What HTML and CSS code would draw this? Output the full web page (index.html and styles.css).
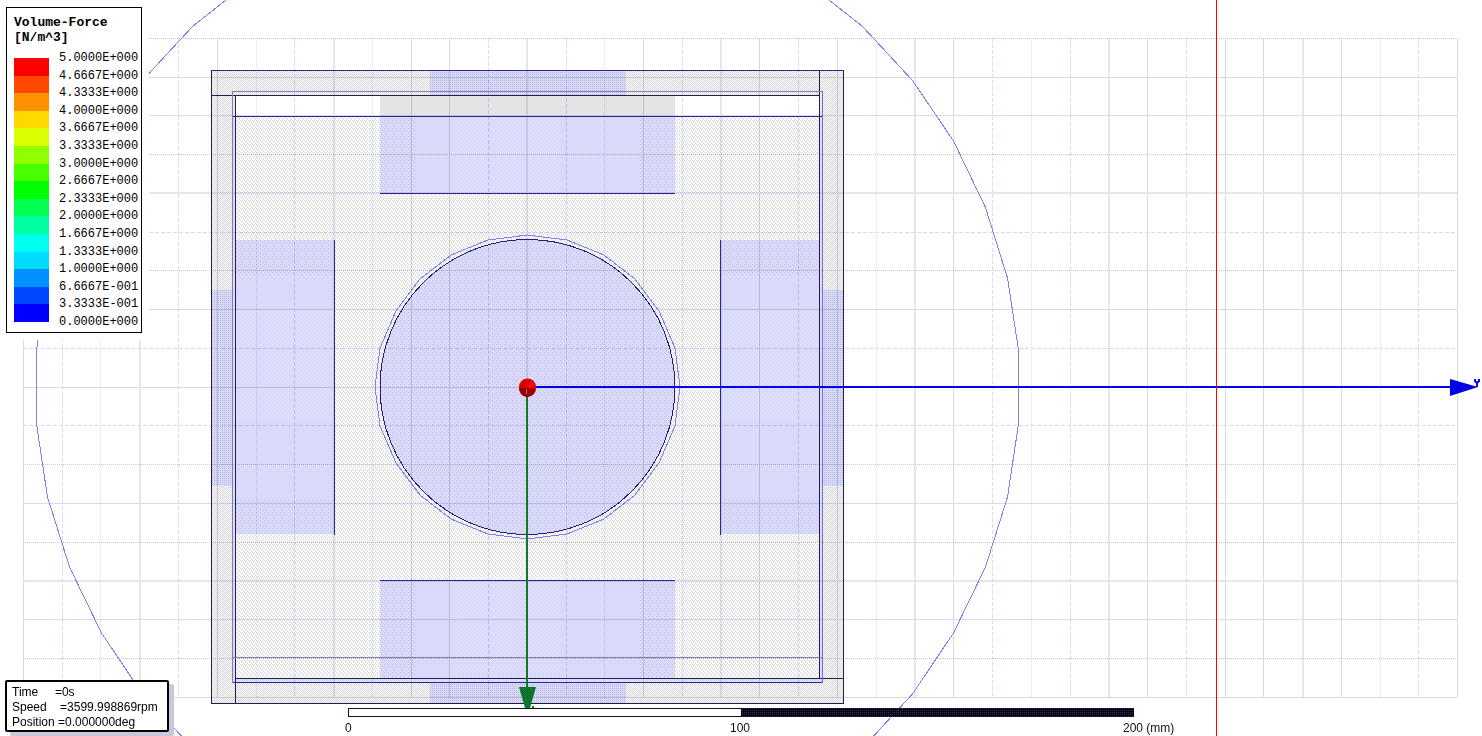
FILE: index.html
```
<!DOCTYPE html>
<html lang="en">
<head>
<meta charset="utf-8">
<title>Volume-Force plot</title>
<link rel="stylesheet" href="styles.css">
</head>
<body>
<main class="viewport">
<svg class="scene" viewBox="0 0 1482 736" role="img" aria-label="Motor cross section with grid and axes">
<defs>
<pattern id="air" width="4" height="4" patternUnits="userSpaceOnUse">
<path class="px-air" d="M0 0h1v1h-1zM2 0h1v1h-1zM1 2h1v1h-1zM3 2h1v1h-1z"/>
<path class="px-olive" d="M1 1h1v1h-1zM3 3h1v1h-1z"/>
</pattern>
<pattern id="frame" width="4" height="4" patternUnits="userSpaceOnUse">
<path class="px-frame" d="M0 0h1v1h-1zM2 0h1v1h-1zM1 1h1v1h-1zM3 1h1v1h-1zM0 2h1v1h-1zM2 2h1v1h-1zM1 3h1v1h-1zM3 3h1v1h-1z"/>
</pattern>
<pattern id="rotor" width="4" height="4" patternUnits="userSpaceOnUse">
<path class="px-gray" d="M0 0h1v1h-1zM2 2h1v1h-1z"/>
</pattern>
<pattern id="warm" width="4" height="4" patternUnits="userSpaceOnUse">
<path class="px-cream" d="M0 0h1v1h-1zM2 2h1v1h-1z"/>
</pattern>
<pattern id="patch" width="2" height="2" patternUnits="userSpaceOnUse">
<path class="px-dusk" d="M0 0h1v1h-1z"/>
</pattern>
<pattern id="ink" width="2" height="2" patternUnits="userSpaceOnUse">
<rect class="ink-dark" width="2" height="2"/>
<path class="ink-blue" d="M0 0h1v1h-1z"/>
</pattern>
<pattern id="leaf" width="2" height="2" patternUnits="userSpaceOnUse">
<rect class="leaf-a" width="2" height="2"/>
<path class="leaf-b" d="M0 0h1v1h-1zM1 1h1v1h-1z"/>
</pattern>
</defs>

<g class="grid">
<path class="olive" d="M23.5 38V697M217.5 38V697M411.5 38V697M449.5 38V697M643.5 38V697M759.5 38V697M837.5 38V697M953.5 38V697M1147.5 38V697M1225.5 38V697M1263.5 38V697M1341.5 38V697M1457.5 38V697"/>
<path class="olive" d="M23 77.5H1457M23 309.5H1457M23 387.5H1457M23 697.5H1457"/>
<path class="wide" d="M140 38V697M334 38V697M527 38V697M721 38V697M915 38V697M1109 38V697M1303 38V697M23 193H1457M23 581H1457"/>
<path class="blue" d="M23 115.5H1457M23 503.5H1457M23 619.5H1457"/>
<path class="blue dash" d="M62.5 38V697M178.5 38V697M294.5 38V697M488.5 38V697M566.5 38V697M682.5 38V697M798.5 38V697M992.5 38V697M1070.5 38V697M1186.5 38V697M1418.5 38V697M23 232.5H1457M23 348.5H1457M23 425.5H1457"/>
<path class="blue dot" d="M100.5 38V697M256.5 38V697M372.5 38V697M604.5 38V697M876.5 38V697M1031.5 38V697M1380.5 38V697"/>
<path class="khaki dot" d="M23 38.5H1457M23 154.5H1457M23 270.5H1457M23 464.5H1457M23 542.5H1457M23 658.5H1457"/>
</g>

<g class="solids">
<path fill="url(#air)" d="M236 117H819V678H236zM674.500 387A147.500 147.500 0 1 0 379.500 387A147.500 147.500 0 1 0 674.500 387z" fill-rule="evenodd"/>
<path fill="url(#frame)" d="M211 70H843V703H211zM236 96V678H819V96z" fill-rule="evenodd"/>
<circle class="body" cx="527" cy="387" r="147.500"/>
<circle fill="url(#rotor)" cx="527" cy="387" r="147.500"/>
<path class="body" d="M380 117h295v76h-295zM380 581h295v97h-295zM236 240h98v294h-98zM721 240h98v294h-98z"/>
<path fill="url(#rotor)" d="M380 117h35v76h-35zM640 117h35v76h-35zM380 581h35v97h-35zM640 581h35v97h-35zM236 240h98v35h-98zM236 499h98v35h-98zM721 240h98v35h-98zM721 499h98v35h-98z"/>
<path fill="url(#warm)" d="M450 117h110v76h-110zM450 581h110v97h-110zM236 310h98v109h-98zM721 310h98v109h-98z"/>
<path class="px-shade" d="M380 96h295v20h-295z"/>
<path class="body" d="M430 71h196v24h-196zM430 679h196v24h-196zM212 290h23v196h-23zM820 290h23v196h-23z"/>
<path fill="url(#patch)" d="M430 71h196v24h-196zM430 679h196v24h-196zM212 290h23v196h-23zM820 290h23v196h-23z"/>
<path class="body" d="M233 117h2v565h-2zM236 679h586v3h-586zM820 117h2v565h-2z"/>
</g>

<g class="lines">
<path class="navy" d="M211.500 70.500H843.500V703.500H211.500zM211 95.500H819M235.500 95V703M819.500 70V678M235 678.500H843"/>
<path class="indigo" d="M232 116.500H822M232 682.500H822M380 193.500H675M380 580.500H675M334.500 240V535M720.500 240V535M212 70.500H843"/>
<path class="slate" d="M232 683V91.500H822M232 657.500H822"/>
<path class="violet" d="M822.500 91V683"/>
<circle class="rotor-edge" cx="527.500" cy="387" r="147.500"/>
<path class="thin" d="M527.500 235L567 240L604 255L635 279L659 311L675 348L680 387L675 426L659 463L635 495L604 519L567 534L527.500 539L488 534L451 519L420 495L396 463L380 426L375 387L380 348L396 311L420 279L451 255L488 240z"/>
<path class="thin" d="M805 -19L862.500 26.500L912.500 80.500L953.500 141L985.500 207.500L1007.500 278L1018.500 350V424L1007.500 497L985.500 567L953.500 633L912.500 694L862.500 748M250 -19L192.500 26.500L142.500 80.500L101.500 141L69.500 207.500L47.500 278L36.500 350V424L47.500 497L69.500 567L101.500 633L142.500 694L192.500 748"/>
</g>

<g class="axes">
<path class="y-axis" d="M527 387H1451"/>
<path class="y-head" d="M1450 379L1478 387L1450 396z"/>
<path class="y-mark" d="M1475 379v2l2 2v4M1479 379v2l-2 2"/>
<path class="x-axis" d="M527 387V688"/>
<path class="x-head" d="M519 687H536L530 708H525z"/>
<path class="x-dot" d="M532 706h2v2h-2z"/>
<circle class="origin" cx="527.500" cy="387" r="8.500"/>
<path class="origin-shade" d="M519 388L527 388L536 389A8.500 8.500 0 0 1 519 388z"/>
<path class="origin-glint" d="M527 387L534 380L533 384L536 385L530 388z"/>
<path class="origin-scar" d="M526.500 389v5"/>
<path class="section" d="M1216.500 0V736"/>
</g>

<g class="scale">
<rect class="scale-box" x="348.500" y="708.500" width="785" height="8" rx="1"/>
<rect fill="url(#ink)" x="741" y="708" width="393" height="9" rx="1"/>
<text x="345" y="732">0</text>
<text x="730" y="732">100</text>
<text x="1123" y="732">200 (mm)</text>
</g>
</svg>

<section class="legend-area">
<div class="legend">
<h1 class="legend-title">Volume-Force<br>[N/m^3]</h1>
<div class="legend-body">
<div class="ramp">
<i class="c1"></i><i class="c2"></i><i class="c3"></i><i class="c4"></i><i class="c5"></i><i class="c6"></i><i class="c7"></i><i class="c8"></i><i class="c9"></i><i class="c10"></i><i class="c11"></i><i class="c12"></i><i class="c13"></i><i class="c14"></i><i class="c15"></i>
</div>
<ul class="values">
<li>5.0000E+000</li><li>4.6667E+000</li><li>4.3333E+000</li><li>4.0000E+000</li><li>3.6667E+000</li><li>3.3333E+000</li><li>3.0000E+000</li><li>2.6667E+000</li><li>2.3333E+000</li><li>2.0000E+000</li><li>1.6667E+000</li><li>1.3333E+000</li><li>1.0000E+000</li><li>6.6667E-001</li><li>3.3333E-001</li><li>0.0000E+000</li>
</ul>
</div>
</div>
</section>

<section class="status">
<p>Time     =0s</p>
<p>Speed    =3599.998869rpm</p>
<p>Position =0.000000deg</p>
</section>
</main>
</body>
</html>
```
FILE: styles.css
```
* { box-sizing: border-box; }
body { margin: 0; background: #fff; color: #000; font-family: "Liberation Sans", Arial, sans-serif; }
.viewport { position: relative; min-height: 100vh; overflow: hidden; }
.scene { display: block; width: 100%; height: 100vh; }

pattern { shape-rendering: crispEdges; }
.body { fill: #d9d9f9; }
.px-air { fill: #dcdcec; }
.px-frame { fill: #d6d6da; }
.px-olive { fill: #dcdcc4; }
.px-gray { fill: #c2c2e0; }
.px-dusk { fill: #b8b8e0; }
.px-cream { fill: #e8e8fa; }
.px-shade { fill: #e4e4e6; }
.ink-dark { fill: #000010; }
.ink-blue { fill: #303058; }
.leaf-a { fill: #006820; }
.leaf-b { fill: #188038; }

.grid, .solids, .lines { shape-rendering: crispEdges; }
.grid path { fill: none; stroke-width: 1; }
.grid .olive { stroke: #dadad8; }
.grid .blue { stroke: #d8d8f8; }
.grid .khaki { stroke: #c8c8c0; }
.grid .wide { stroke: #e6e6ee; stroke-width: 2; }
.grid .dash { stroke-dasharray: 4 2; }
.grid .dot { stroke-dasharray: 1 1; }
.solids { mix-blend-mode: multiply; }

.lines path, .lines circle { fill: none; stroke-width: 1; }
.lines .navy { stroke: #202050; }
.lines .indigo { stroke: #282888; }
.lines .slate { stroke: #8080b0; }
.lines .violet { stroke: #7070d8; }
.lines .rotor-edge { stroke: #202078; }
.lines .thin { stroke: #8080f0; }

.axes path { fill: none; }
.axes .y-axis { stroke: #0000f0; stroke-width: 2; }
.axes .y-head { fill: #0000e8; }
.axes .y-mark { stroke: #0000f0; stroke-width: 2; }
.axes .x-axis { stroke: #107828; stroke-width: 2; }
.axes .x-head { fill: url(#leaf); }
.axes .x-dot { fill: #008000; }
.axes .origin { fill: #d80000; }
.axes .origin-shade { fill: #980000; }
.axes .origin-glint { fill: #ff1010; }
.axes .origin-scar { stroke: #d06060; }
.axes .section { stroke: #f00; shape-rendering: crispEdges; }

.scale { shape-rendering: crispEdges; }
.scale-box { fill: #fff; stroke: #101030; }
.scale text { font-size: 12px; fill: #101020; }

.legend-area { position: absolute; left: 0; top: 0; padding: 7px 7px 7px 6px; background: #fff; }
.legend { width: 136px; padding: 7px 0 6px 7px; border: 1px solid #000; background: #fff; font-family: "Liberation Mono", "Courier New", monospace; }
.legend-title { margin: 0; font-size: 13px; line-height: 15px; font-weight: bold; }
.legend-body { display: flex; gap: 10px; height: 281px; }
.ramp { display: grid; grid-template-rows: repeat(15, 1fr); width: 35px; height: 264px; margin-top: 13px; }
.values { display: flex; flex-direction: column; justify-content: space-between; height: 278px; margin: 6px 0 0; padding: 0; list-style: none; font-size: 12px; line-height: 14px; }
.c1 { background: #f00; }
.c2 { background: #ff4800; }
.c3 { background: #ff9000; }
.c4 { background: #ffd800; }
.c5 { background: #dcff00; }
.c6 { background: #90ff00; }
.c7 { background: #48ff00; }
.c8 { background: #00ff00; }
.c9 { background: #00ff50; }
.c10 { background: #00ffa0; }
.c11 { background: #00ffee; }
.c12 { background: #00dcff; }
.c13 { background: #0090ff; }
.c14 { background: #0048ff; }
.c15 { background: #00f; }

.status { position: absolute; left: 5px; bottom: 4px; padding: 3px 9px 0 5px; border: 2px solid #000; border-radius: 2px; background: #fff; box-shadow: 5px 4px 0 #c8c8dc; font-size: 12px; line-height: 15px; }
.status p { margin: 0; white-space: pre; }
```
